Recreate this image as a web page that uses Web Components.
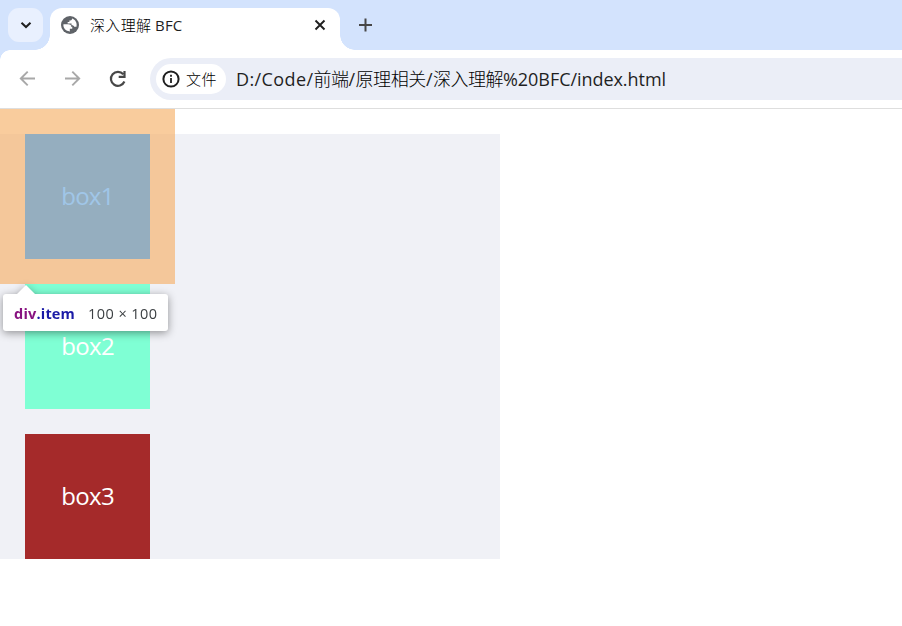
<!DOCTYPE html>
<html lang="zh-CN"><head><meta charset="utf-8"><title>深入理解 BFC</title>
<style>
body{margin:0;background:#fff;overflow:hidden;font-family:"Open Sans","Noto Sans","Noto Sans CJK SC",sans-serif}
</style></head><body>
<browser-window></browser-window>
<script>
// A run of text whose tracking is adjusted to fill the given width.
class TextRun extends HTMLElement{
  constructor(){super();this.attachShadow({mode:'open'}).innerHTML=`<style>:host{display:inline-block;white-space:pre;flex:none}:host([lang]){font-family:"Noto Sans CJK SC",sans-serif;font-weight:300;color:#000}span{display:inline-block}</style><span><slot></slot></span>`}
  connectedCallback(){
    const s=this.shadowRoot.querySelector('span'),w=+this.getAttribute('w');
    this.style.width=w+'px';
    s.style.letterSpacing=(w-s.getBoundingClientRect().width)/this.textContent.length+'px';
  }
}
class TabStrip extends HTMLElement{
  constructor(){super();this.attachShadow({mode:'open'}).innerHTML=`<style>
:host{display:flex;height:50px;background:#d3e3fd;box-sizing:border-box;padding:8px 0 0 8px;color:#1f1f1f}
.menu{width:35px;height:34px;border-radius:11px;background:#e9f0fe;display:grid;place-items:center;margin-right:7px}
.tab{position:relative;width:290px;height:42px;background:#fff;border-radius:12px 12px 0 0;display:flex;box-sizing:border-box;padding:0 13px 0 10px;align-items:center}
.tab::before,.tab::after{content:"";position:absolute;bottom:0;width:15px;height:15px}
.tab::before{left:-15px;background:radial-gradient(circle at 0 0,transparent 14.5px,#fff 15px)}
.tab::after{right:-15px;background:radial-gradient(circle at 100% 0,transparent 14.5px,#fff 15px)}
.t{font-size:15px;line-height:20px;margin:-9px auto 0 10px;display:flex}
.tab svg{margin-top:-8px}
.plus{margin:10px 0 0 18px}
svg{display:block}
</style>
<div class="menu"><svg width="12" height="8" viewBox="0 0 12 8"><path d="M1.500 1.700 6 6l4.500-4.300" fill="none" stroke="#1f1f1f" stroke-width="2"/></svg></div>
<div class="tab"><svg width="20" height="20" viewBox="0 0 20 20"><circle cx="10" cy="10" r="9" fill="#5f6368"/><path transform="translate(1 1) scale(.9)" d="M2.700 9.300h5.300c2.300 0 3.300.8 3.300 2.600h1.200v2.300H9.800v2.900C5.500 17.200 2.100 13.400 2.700 9.300zM12.300 2.900c0 1.500-.7 2-1.900 2H9.300v1.900H7.400v1.500h4.300v2.100c1.700-.2 2.500.5 2.900 1.500h2.600C18.200 8 16 4.100 12.300 2.900z" fill="#fff"/></svg>
<div class="t"><text-run w="65" lang="zh">深入理解 </text-run><text-run w="27.500">BFC</text-run></div>
<svg width="14" height="14" viewBox="0 0 14 14"><path d="m2.500 2.500 9 9m0-9-9 9" stroke="#1f1f1f" stroke-width="1.900"/></svg></div>
<svg class="plus" width="14" height="14" viewBox="0 0 14 14"><path d="M7.500 .5v13M1 7h13" stroke="#474747" stroke-width="2"/></svg>`}
}
class AddressBar extends HTMLElement{
  constructor(){super();this.attachShadow({mode:'open'}).innerHTML=`<style>
:host{display:flex;height:59px;box-sizing:border-box;padding:8px 0 9px 19px;background:#fff;border-bottom:1px solid #dedede;color:#1f1f1f}
svg{display:block;flex:none}
.nav{margin-top:12px}
.omni{height:42px;margin-left:23px;flex:1;background:#ebeef7;border-radius:21px 0 0 21px;box-sizing:border-box;padding:6px 0 6px 6px;display:flex}
.chip{width:70px;height:30px;border-radius:15px;background:#fff;box-sizing:border-box;padding-left:6px;display:flex;align-items:center;font-size:15px;line-height:20px}
.chip text-run{margin:0 0 0 6px}
.url{display:flex;font-size:18px;line-height:30px;margin-left:10px}
.url [lang]{margin-top:-1px}
</style>
<svg class="nav" width="17" height="17" viewBox="0 0 17 17"><path d="M16 8.500H2M8.700 1.600 1.800 8.500l6.900 6.900" fill="none" stroke="#a8a8a8" stroke-width="1.900"/></svg>
<svg class="nav" style="margin-left:28px" width="17" height="17" viewBox="0 0 17 17"><path d="M1 8.500h14M8.300 1.600l6.900 6.900-6.900 6.900" fill="none" stroke="#a8a8a8" stroke-width="1.900"/></svg>
<svg class="nav" style="margin-left:28px" width="18" height="18" viewBox="0 0 18 18"><path d="M14.300 4.300A7 7 0 1 0 15.400 11.500M15.500 1v5.800H9.700" fill="none" stroke="#474747" stroke-width="2.200"/></svg>
<div class="omni"><div class="chip"><svg width="18" height="18" viewBox="0 0 18 18"><circle cx="9" cy="9" r="7.600" fill="none" stroke="#1f1f1f" stroke-width="2"/><path d="M9 8v5M9 4.800v1.900" stroke="#1f1f1f" stroke-width="1.800"/></svg><text-run w="31" lang="zh">文件</text-run></div>
<div class="url"><text-run w="77.500">D:/Code/</text-run><text-run w="35" lang="zh">前端</text-run><text-run w="7">/</text-run><text-run w="70.500" lang="zh">原理相关</text-run><text-run w="7">/</text-run><text-run w="70" lang="zh">深入理解</text-run><text-run w="163">%20BFC/index.html</text-run></div></div>`}
}
class BoxItem extends HTMLElement{
  constructor(){super();this.attachShadow({mode:'open'}).innerHTML=`<style>
:host{display:block;width:125px;height:125px;margin:0 25px 25px;box-sizing:border-box;padding-left:36.200px;line-height:123px;font-size:24px;color:#fff;background:var(--fill)}
text-run{vertical-align:top}
</style><text-run w="${this.getAttribute('w')}">${this.getAttribute('label')}</text-run>`}
}
class InspectTip extends HTMLElement{
  constructor(){super();this.attachShadow({mode:'open'}).innerHTML=`<style>
:host{position:absolute;left:3px;top:294px;width:165px;height:37px;filter:drop-shadow(0 2px 4px #0006)}
.b{height:37px;background:#fff;border-radius:3px;display:flex;box-sizing:border-box;padding-left:11px;font-size:14.500px;line-height:39px}
.b::before{content:"";position:absolute;left:14px;top:-9px;width:18px;height:9px;background:#fff;clip-path:polygon(50% 0,100% 100%,0 100%)}
.n{font-weight:700;color:#881280}.c{font-weight:700;color:#1a1aa6}.s{color:#3c4043;margin-left:13px}
</style><div class="b"><text-run class="n" w="22.500">div</text-run><text-run class="c" w="38.500">.item</text-run><text-run class="s" w="69.500">100 × 100</text-run></div>`}
}
class PageView extends HTMLElement{
  constructor(){super();this.attachShadow({mode:'open'}).innerHTML=`<style>
:host{display:block;height:517px;padding-top:25px;box-sizing:border-box}
.wrap{width:500px;height:425px;background:#f0f1f6;overflow:hidden}
.hl{position:absolute;left:0;top:109px;width:125px;height:125px;border:25px solid rgba(246,178,107,.66);background:rgba(111,168,220,.66);background-clip:padding-box}
</style><div class="wrap"><box-item label="box1" w="52.500" style="--fill:#deb887"></box-item><box-item label="box2" w="53" style="--fill:#7fffd4"></box-item><box-item label="box3" w="53" style="--fill:#a52a2a"></box-item></div><div class="hl"></div><inspect-tip></inspect-tip>`}
}
class BrowserWindow extends HTMLElement{
  constructor(){super();this.attachShadow({mode:'open'}).innerHTML=`<style>:host{display:block;position:relative;width:902px;height:626px;overflow:hidden;background:#fff}.curve{position:absolute;left:0;top:50px;width:10px;height:10px;background:radial-gradient(circle at 100% 100%,#fff 9.500px,#d3e3fd 10px)}</style>
<tab-strip></tab-strip><address-bar></address-bar><page-view></page-view><div class="curve"></div>`}
}
for(const [n,c] of Object.entries({'text-run':TextRun,'tab-strip':TabStrip,'address-bar':AddressBar,'box-item':BoxItem,'inspect-tip':InspectTip,'page-view':PageView,'browser-window':BrowserWindow}))customElements.define(n,c);
</script></body></html>
